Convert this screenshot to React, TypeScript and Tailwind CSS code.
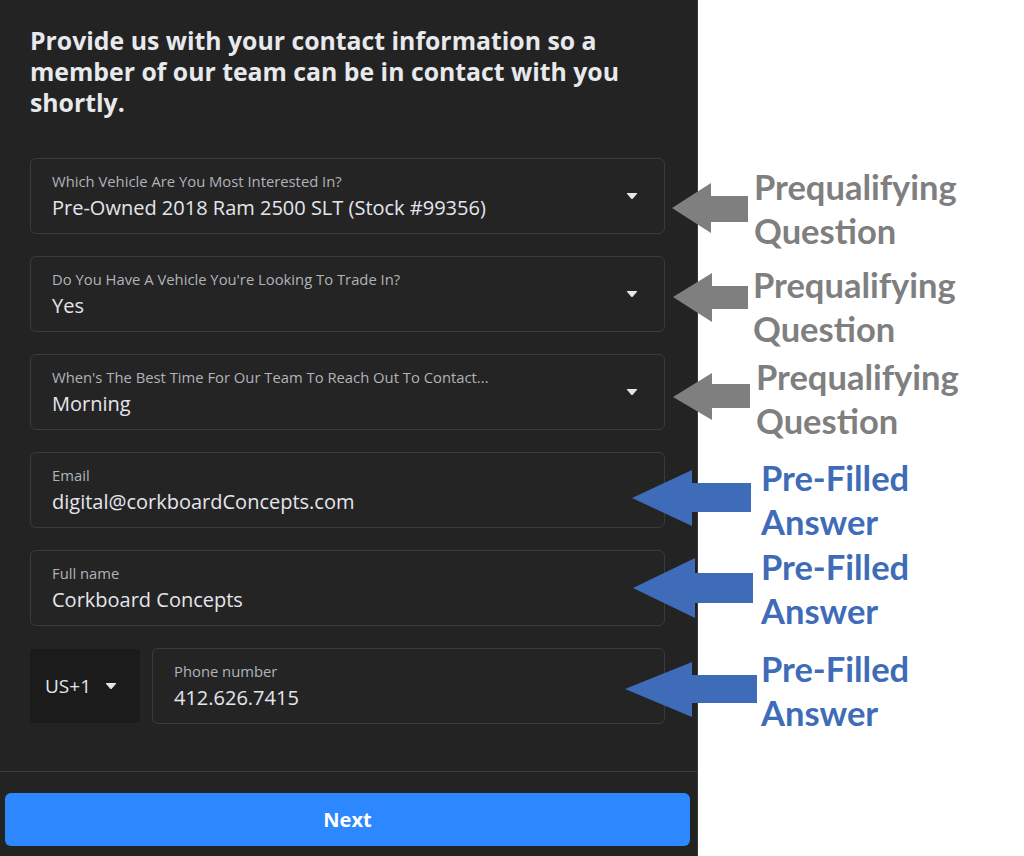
import React from "react";

const Caret = () => (
  <svg width="12" height="8" viewBox="0 0 11 7" className="shrink-0">
    <path d="M1.2 0.8 H9.8 Q10.6 0.8 10.1 1.5 L6.2 6 Q5.5 6.7 4.8 6 L0.9 1.5 Q0.4 0.8 1.2 0.8 Z" fill="#e4e6eb" />
  </svg>
);

const Field = ({ label, value, select }: { label: string; value: string; select?: boolean }) => (
  <div className="h-[76px] rounded-[6px] border border-[#3a3b3c] bg-[#242425] flex items-center pl-[21px] pr-[26px]">
    <div className="flex-1 flex flex-col">
      <div className="text-[14.8px] leading-[18px] text-[#b0b3b8]">{label}</div>
      <div className="mt-[5px] text-[20px] leading-[26px] text-[#e4e6eb]">{value}</div>
    </div>
    {select && <Caret />}
  </div>
);

const Note = ({ top, left, l1, l2, color }: { top: number; left: number; l1: string; l2: string; color: string }) => (
  <div
    className="absolute font-bold text-[34.5px] leading-[44px]"
    style={{ top, left, color, fontFamily: "Lato, 'Noto Sans', sans-serif" }}
  >
    <div>{l1}</div>
    <div>{l2}</div>
  </div>
);

const arrow = (tipX: number, tipY: number, backX: number, top: number, bottom: number, endX: number, sTop: number, sBot: number) =>
  `${tipX},${tipY} ${backX},${top} ${backX},${sTop} ${endX},${sTop} ${endX},${sBot} ${backX},${sBot} ${backX},${bottom}`;

export default function App() {
  return (
    <div className="relative w-[1024px] h-[856px] bg-white flex overflow-hidden" style={{ fontFamily: "'Open Sans', 'Noto Sans', sans-serif" }}>
      <div className="w-[698px] h-full bg-[#232324] border-r border-[#3a3a3a] flex flex-col">
        <div className="pl-[30px] pt-[25px] w-[645px] text-[24.8px] leading-[31px] font-bold text-[#e8e9ec]">
          Provide us with your contact information so a member of our team can be in contact with you shortly.
        </div>
        <div className="mt-[40px] pl-[30px] pr-[32px] flex flex-col gap-[22px]">
          <Field label="Which Vehicle Are You Most Interested In?" value="Pre-Owned 2018 Ram 2500 SLT (Stock #99356)" select />
          <Field label="Do You Have A Vehicle You're Looking To Trade In?" value="Yes" select />
          <Field label="When's The Best Time For Our Team To Reach Out To Contact..." value="Morning" select />
          <Field label="Email" value="digital@corkboardConcepts.com" />
          <Field label="Full name" value="Corkboard Concepts" />
          <div className="flex gap-[12px] items-center">
            <div className="w-[110px] h-[74px] rounded-[4px] bg-[#1b1b1c] flex items-center pl-[15px] gap-[14px]">
              <span className="text-[19px] text-[#e4e6eb]">US+1</span>
              <Caret />
            </div>
            <div className="flex-1">
              <Field label="Phone number" value="412.626.7415" />
            </div>
          </div>
        </div>
        <div className="mt-[47px] border-t border-[#3a3b3c] pt-[21px] pl-[5px] pr-[7px]">
          <div className="h-[53px] rounded-[6px] bg-[#2d88ff] flex items-center justify-center text-white font-bold text-[20px]">
            Next
          </div>
        </div>
      </div>

      <svg className="absolute left-0 top-0" width="1024" height="856">
        <polygon points={arrow(672, 208, 711, 183, 233, 748, 196, 222)} fill="#7f7f7f" />
        <polygon points={arrow(673, 297, 712, 273, 322, 748, 286, 309)} fill="#7f7f7f" />
        <polygon points={arrow(673, 397, 712, 373, 420, 750, 384, 408)} fill="#7f7f7f" />
        <polygon points={arrow(632, 498, 692, 470, 526, 751, 483, 512)} fill="#3f6cb8" />
        <polygon points={arrow(633, 588, 695, 558, 618, 753, 573, 603)} fill="#3f6cb8" />
        <polygon points={arrow(625, 689, 692, 662, 717, 757, 675, 703)} fill="#3f6cb8" />
      </svg>

      <Note top={165} left={754} l1="Prequalifying" l2="Question" color="#7f7f7f" />
      <Note top={263} left={753} l1="Prequalifying" l2="Question" color="#7f7f7f" />
      <Note top={355} left={756} l1="Prequalifying" l2="Question" color="#7f7f7f" />
      <Note top={456} left={761} l1="Pre-Filled" l2="Answer" color="#3f6cb8" />
      <Note top={545} left={761} l1="Pre-Filled" l2="Answer" color="#3f6cb8" />
      <Note top={647} left={761} l1="Pre-Filled" l2="Answer" color="#3f6cb8" />
    </div>
  );
}
